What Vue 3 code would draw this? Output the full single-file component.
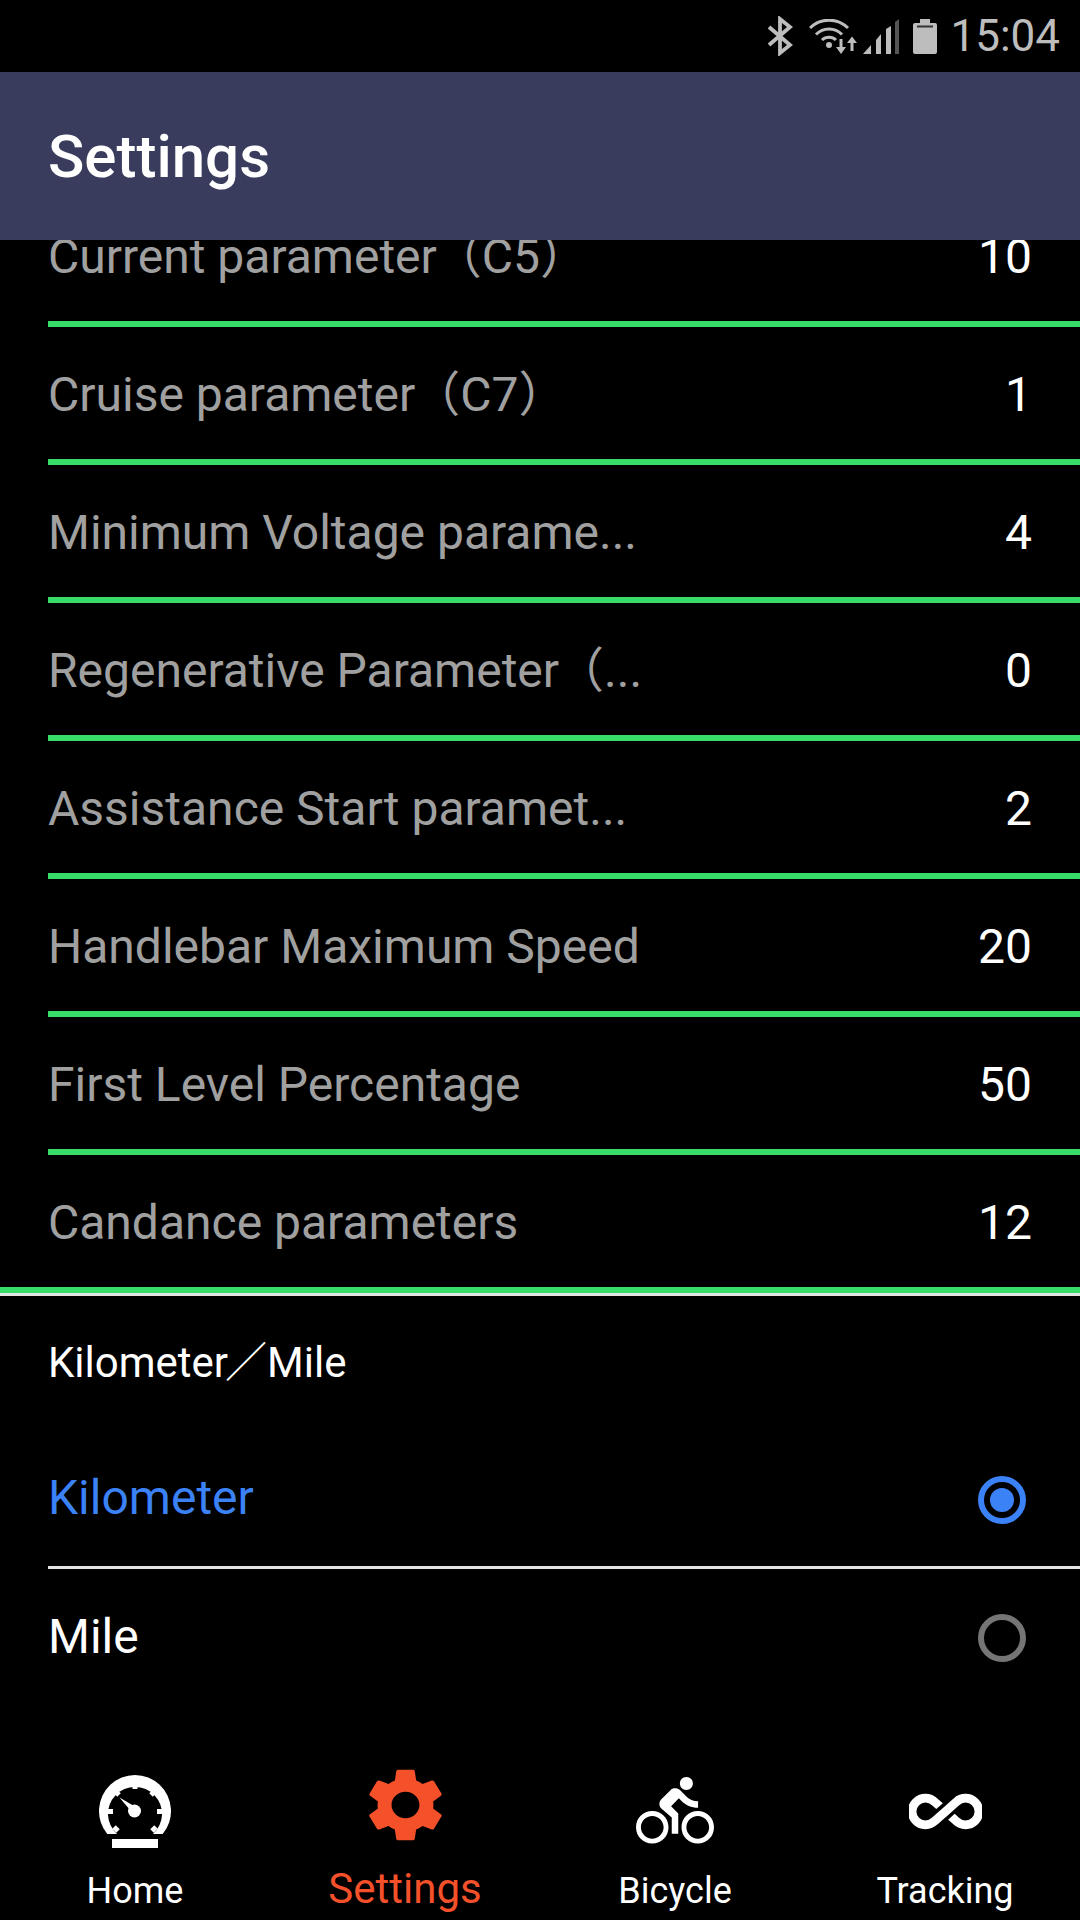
<script setup>
const params = [
  { label: "Current parameter", tail: "（C5）", value: "10" },
  { label: "Cruise parameter", tail: "（C7）", value: "1" },
  { label: "Minimum Voltage parame...", value: "4" },
  { label: "Regenerative Parameter", tail: "（...", value: "0" },
  { label: "Assistance Start paramet...", value: "2" },
  { label: "Handlebar Maximum Speed", value: "20" },
  { label: "First Level Percentage", value: "50" },
  { label: "Candance parameters", value: "12" },
];
</script>

<template>
  <div class="screen">
    <div class="status-bar">
      <svg class="st-bt" width="26" height="40" viewBox="0 0 26 40">
        <polyline points="2,11 23,29 13,37 13,3 23,11 2,29" fill="none" stroke="#bdbdbd" stroke-width="3.800" />
      </svg>
      <svg class="st-wifi" width="48" height="35" viewBox="0 0 48 35">
        <g fill="none" stroke="#bdbdbd" stroke-width="3">
          <path d="M1 9 A27 27 0 0 1 39 9" />
          <path d="M7 15.500 A18 18 0 0 1 33 15.500" />
          <path d="M13 21 A10 10 0 0 1 27 21" />
        </g>
        <circle cx="20" cy="26" r="3" fill="#bdbdbd" />
        <path d="M30.500 20h3v8h3.500l-5 7-5-7h3.500zM41.500 32h3v-8h3.500l-5-6.500-5 6.500h3.500z" fill="#bdbdbd" />
      </svg>
      <svg class="st-signal" width="36" height="35" viewBox="0 0 36 35">
        <polygon points="0,35 8,26 8,35" fill="#bdbdbd" />
        <polygon points="13,35 13,21 18,15 18,35" fill="#bdbdbd" />
        <polygon points="23,35 23,10 28,7 28,35" fill="#bdbdbd" />
        <polygon points="32,35 32,3 36,0 36,35" fill="#555" />
      </svg>
      <svg class="st-batt" width="24" height="35" viewBox="0 0 24 35">
        <path d="M7 0h10v4h5a2 2 0 0 1 2 2v27a2 2 0 0 1-2 2H2a2 2 0 0 1-2-2V6a2 2 0 0 1 2-2h5z" fill="#bdbdbd" />
        <rect x="4" y="6.500" width="16" height="2" fill="#333" />
      </svg>
      <span class="st-time">15:04</span>
    </div>

    <header class="app-bar">Settings</header>

    <div class="param-viewport">
      <div class="param-list">
        <div v-for="p in params" :key="p.label" class="param-row">
          <span class="param-label">{{ p.label }}<span v-if="p.tail" class="wide">{{ p.tail }}</span></span>
          <span class="param-value">{{ p.value }}</span>
        </div>
      </div>
    </div>

    <section class="units">
      <div class="units-title">
        <span>Kilometer<span class="wide">／</span>Mile</span>
      </div>
      <div class="unit-row selected">
        <span>Kilometer</span>
        <span class="radio on"></span>
      </div>
      <div class="unit-line"></div>
      <div class="unit-row mile">
        <span>Mile</span>
        <span class="radio"></span>
      </div>
    </section>

    <nav class="tabs">
      <div class="tab">
        <div class="tab-icon">
          <svg width="72" height="73" viewBox="0 0 72 73">
            <path d="M8.300 59A36 36 0 1 1 63.700 59H54A27 27 0 1 0 18 59Z" fill="#fff" />
            <g stroke="#fff" stroke-width="5">
              <line x1="36" y1="6" x2="36" y2="14" />
              <line x1="6" y1="36.500" x2="14" y2="36.500" />
              <line x1="66" y1="36.500" x2="58" y2="36.500" />
              <line x1="15" y1="15" x2="20" y2="20" />
              <line x1="57" y1="15" x2="52" y2="20" />
              <line x1="19" y1="56" x2="15" y2="52" />
              <line x1="53" y1="56" x2="57" y2="52" />
            </g>
            <circle cx="35.500" cy="36" r="6.500" fill="#fff" />
            <polygon points="20.500,22.500 35,31 31,35" fill="#fff" />
            <rect x="13" y="64" width="46" height="9" fill="#fff" />
          </svg>
        </div>
        <span class="tab-label">Home</span>
      </div>

      <div class="tab active">
        <div class="tab-icon">
          <svg width="93" height="88" viewBox="0 0 24 24" preserveAspectRatio="none">
            <path d="M19.140 12.940c.04-.3.06-.61.06-.94 0-.32-.02-.64-.07-.94l2.030-1.580c.18-.14.23-.41.12-.61l-1.920-3.320c-.12-.22-.37-.29-.59-.22l-2.390.96c-.5-.38-1.030-.7-1.620-.94l-.36-2.540c-.04-.24-.24-.41-.48-.41h-3.840c-.24 0-.43.17-.47.41l-.36 2.540c-.59.24-1.130.57-1.620.94l-2.390-.96c-.22-.08-.47 0-.59.22L2.740 8.870c-.12.21-.08.47.12.61l2.030 1.580c-.05.3-.09.63-.09.94s.02.64.07.94l-2.030 1.580c-.18.14-.23.41-.12.61l1.920 3.320c.12.22.37.29.59.22l2.390-.96c.5.38 1.030.7 1.620.94l.36 2.540c.05.24.24.41.48.41h3.840c.24 0 .44-.17.47-.41l.36-2.540c.59-.24 1.130-.56 1.620-.94l2.390.96c.22.08.47 0 .59-.22l1.920-3.320c.12-.22.07-.47-.12-.61l-2.010-1.580zM12 15.600c-1.980 0-3.600-1.620-3.600-3.600s1.620-3.600 3.600-3.600 3.600 1.620 3.600 3.600-1.620 3.600-3.600 3.600z" fill="#f4502a" />
          </svg>
        </div>
        <span class="tab-label">Settings</span>
      </div>

      <div class="tab">
        <div class="tab-icon">
          <svg width="78" height="78" viewBox="0 0 24 24">
            <path d="M15.500 5.500c1.100 0 2-.9 2-2s-.9-2-2-2-2 .9-2 2 .9 2 2 2zM5 12c-2.800 0-5 2.200-5 5s2.200 5 5 5 5-2.200 5-5-2.200-5-5-5zm0 8.500c-1.900 0-3.500-1.600-3.500-3.500s1.600-3.500 3.500-3.500 3.500 1.600 3.500 3.500-1.600 3.500-3.500 3.500zm5.800-10l2.400-2.400.8.8c1.300 1.300 3 2.100 5.100 2.100V9c-1.500 0-2.700-.6-3.600-1.500l-1.900-1.900c-.5-.4-1-.6-1.600-.6s-1.100.2-1.400.6L7.800 8.400c-.4.4-.6.9-.6 1.400 0 .6.2 1.100.6 1.400L11 14v5h2v-6.200l-2.200-2.300zM19 12c-2.800 0-5 2.200-5 5s2.200 5 5 5 5-2.200 5-5-2.200-5-5-5zm0 8.500c-1.900 0-3.500-1.600-3.500-3.500s1.600-3.500 3.500-3.500 3.500 1.600 3.500 3.500-1.600 3.500-3.500 3.500z" fill="#fff" />
          </svg>
        </div>
        <span class="tab-label">Bicycle</span>
      </div>

      <div class="tab">
        <div class="tab-icon">
          <svg width="73" height="73" viewBox="0 0 24 24">
            <path d="M18.600 6.620c-1.440 0-2.800.56-3.770 1.530L12 10.660 10.480 12h.01L7.800 14.390c-.64.64-1.490.99-2.400.99-1.870 0-3.390-1.510-3.390-3.380S3.530 8.620 5.400 8.620c.91 0 1.760.35 2.440 1.030l1.130 1 1.510-1.340L9.220 8.200C8.200 7.180 6.840 6.620 5.400 6.620 2.420 6.620 0 9.040 0 12s2.420 5.380 5.400 5.380c1.440 0 2.800-.56 3.770-1.530l2.830-2.500.01.01L13.520 12h-.01l2.690-2.390c.64-.64 1.490-.99 2.400-.99 1.870 0 3.390 1.510 3.390 3.380s-1.520 3.380-3.390 3.380c-.9 0-1.760-.35-2.440-1.030l-1.140-1.010-1.510 1.340 1.270 1.120c1.020 1.010 2.370 1.570 3.820 1.570 2.980 0 5.400-2.410 5.400-5.380s-2.420-5.370-5.400-5.370z" fill="#fff" stroke="#fff" stroke-width="0.850" />
          </svg>
        </div>
        <span class="tab-label">Tracking</span>
      </div>
    </nav>
  </div>
</template>

<style scoped>
.screen {
  width: 1080px;
  height: 1920px;
  display: flex;
  flex-direction: column;
  overflow: hidden;
  background: #000;
  color: #fff;
  font-family: Roboto, "Noto Sans CJK JP", sans-serif;
}

.status-bar {
  height: 72px;
  flex: none;
  display: flex;
  align-items: center;
  justify-content: flex-end;
  padding-right: 20px;
}

.st-bt {
  margin-right: 16px;
}

.st-wifi {
  margin-right: 6px;
}

.st-signal {
  margin-right: 14px;
}

.st-time {
  margin-left: 13px;
  font-size: 44px;
  color: #bdbdbd;
}

.app-bar {
  height: 168px;
  flex: none;
  display: flex;
  align-items: center;
  padding-left: 48px;
  background: #393c5c;
  font-size: 60px;
  font-weight: 500;
}

.param-viewport {
  height: 1053px;
  flex: none;
  overflow: hidden;
}

.param-list {
  margin-top: -51px;
}

.param-row {
  height: 138px;
  box-sizing: border-box;
  margin-left: 48px;
  padding-top: 3px;
  padding-right: 48px;
  display: flex;
  align-items: center;
  justify-content: space-between;
  border-bottom: 6px solid #38dc69;
  font-size: 48px;
  line-height: 56px;
}

.param-row:last-child {
  margin-left: 0;
  padding-left: 48px;
}

.param-label {
  color: #a0a0a0;
  white-space: nowrap;
}

.wide {
  margin-left: -3px;
}

.units {
  border-top: 3px solid #e4e4e4;
}

.units-title {
  height: 132px;
  display: flex;
  align-items: center;
  padding-left: 48px;
  padding-top: 2px;
  box-sizing: border-box;
  font-size: 42px;
  line-height: 50px;
}

.unit-row {
  height: 138px;
  display: flex;
  align-items: center;
  justify-content: space-between;
  padding: 0 54px 0 48px;
  font-size: 48px;
}

.unit-row.selected {
  color: #3b82f6;
}

.unit-row.mile > span:first-child {
  margin-bottom: 3px;
}

.unit-line {
  height: 3px;
  margin-left: 48px;
  background: #e4e4e4;
}

.radio {
  width: 48px;
  height: 48px;
  box-sizing: border-box;
  border: 6px solid #757575;
  border-radius: 50%;
  display: flex;
  align-items: center;
  justify-content: center;
}

.radio.on {
  margin-top: 5px;
  border-color: #3b82f6;
}

.radio.on::after {
  content: "";
  width: 24px;
  height: 24px;
  border-radius: 50%;
  background: #3b82f6;
}

.tabs {
  margin-top: auto;
  height: 180px;
  flex: none;
  display: grid;
  grid-template-columns: repeat(4, 1fr);
}

.tab {
  display: flex;
  flex-direction: column;
  align-items: center;
}

.tab-icon {
  height: 88px;
  margin-top: 27px;
  display: flex;
  align-items: center;
  justify-content: center;
}

.tab-icon svg {
  flex: none;
}

.tab-label {
  margin-top: 14px;
  font-size: 36px;
  line-height: 44px;
}

.tab.active .tab-icon {
  margin-top: 21px;
}

.tab.active .tab-label {
  margin-top: 18px;
  font-size: 42px;
  color: #f4502a;
}
</style>
